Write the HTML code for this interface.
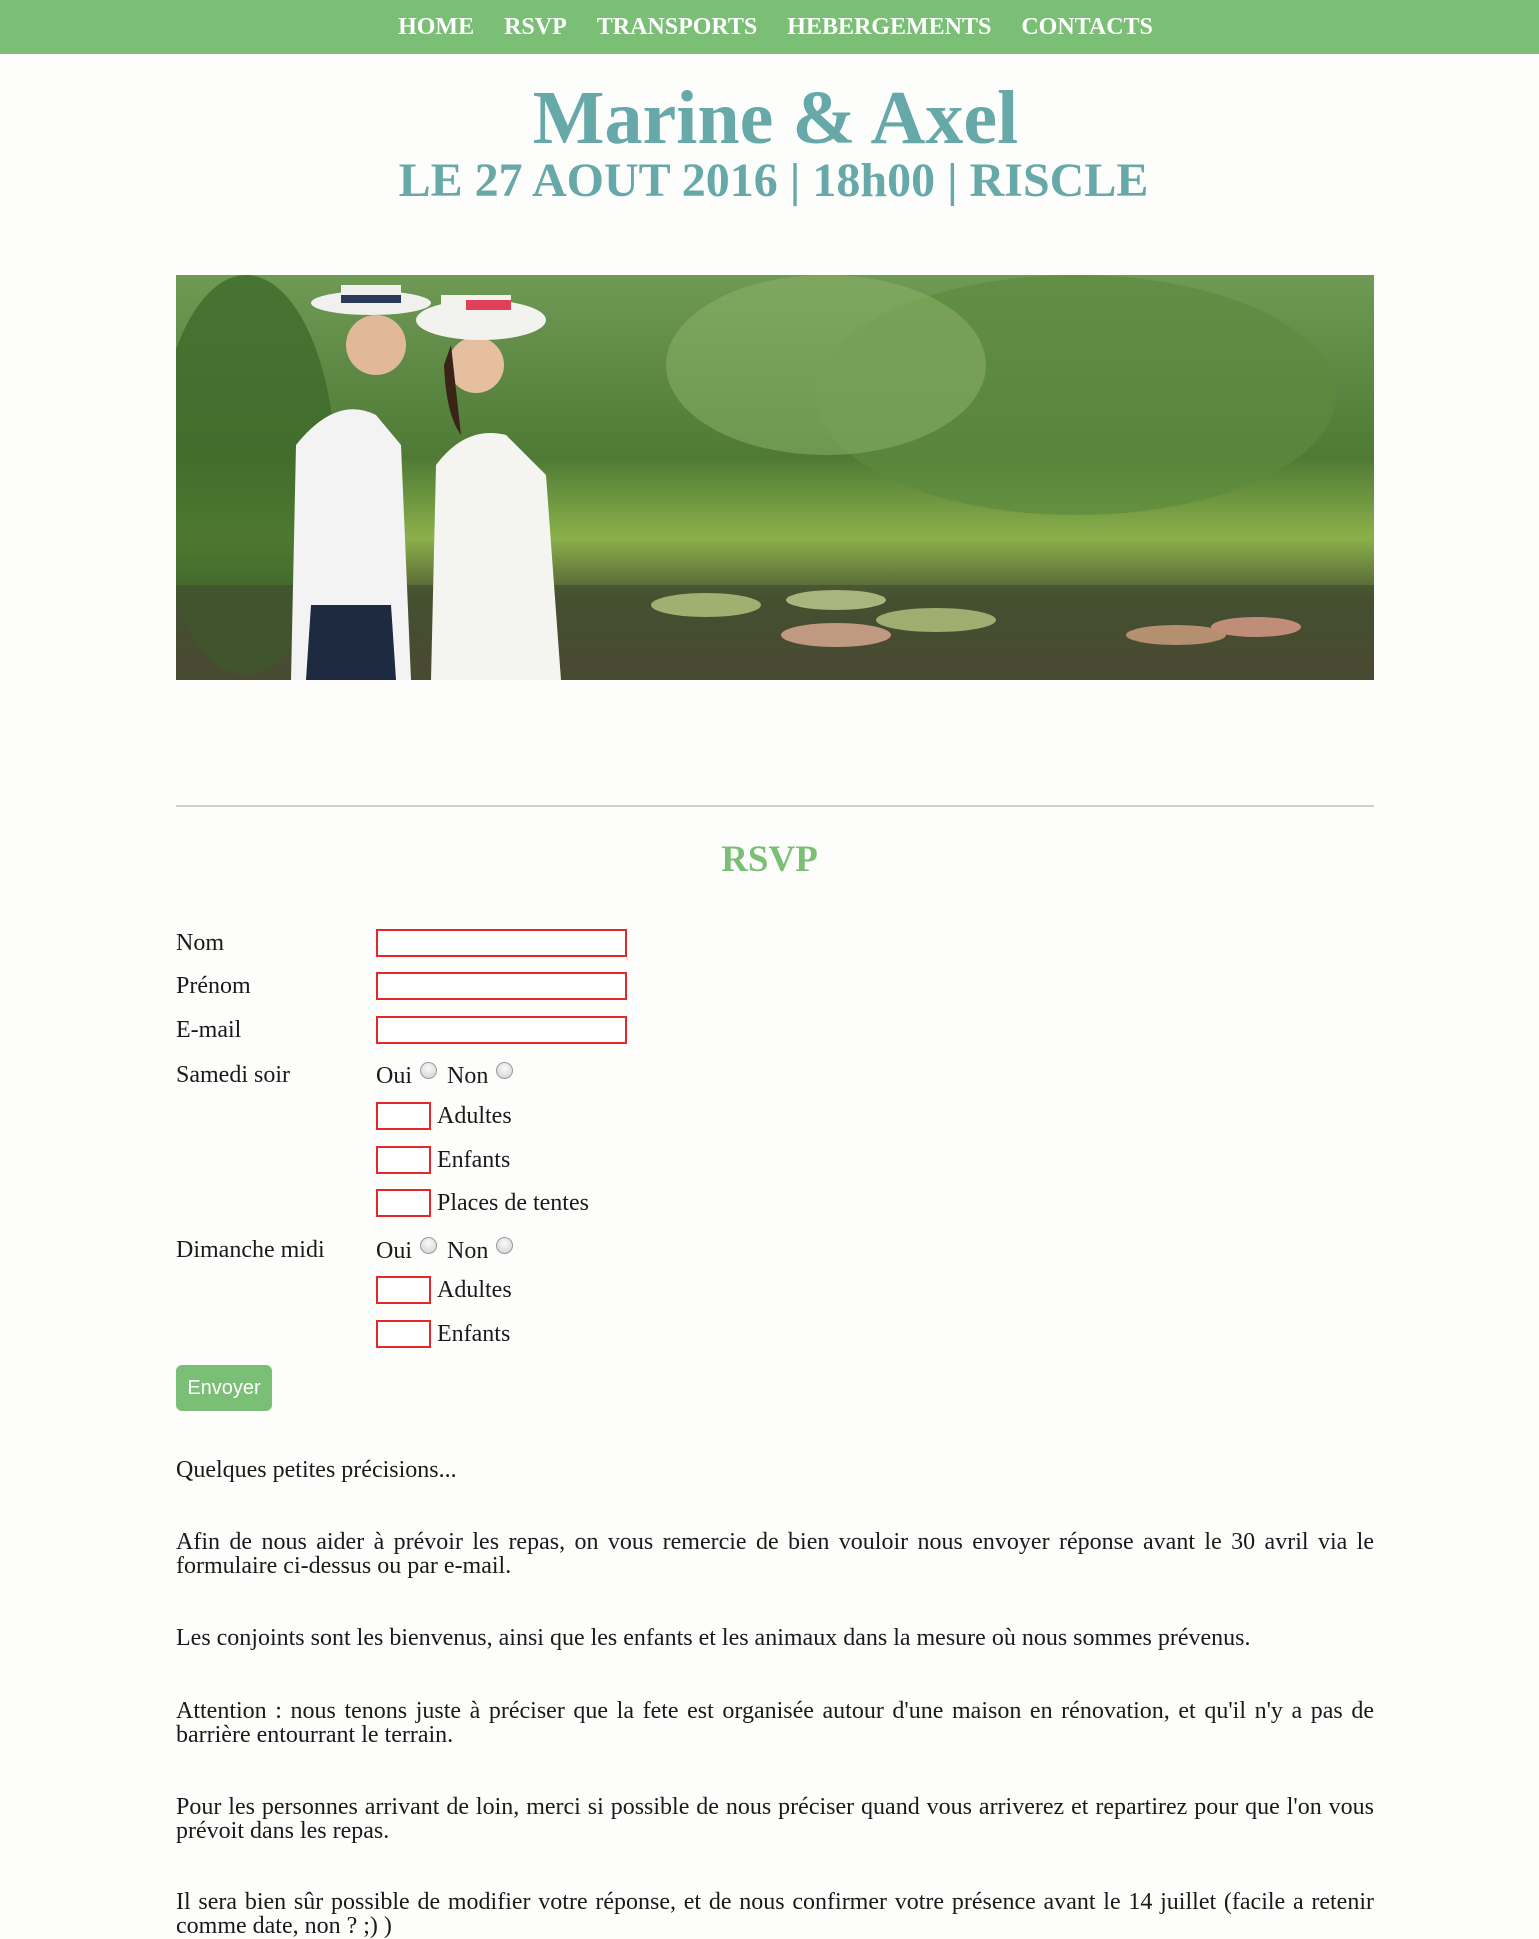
<!DOCTYPE html>
<html><head><meta charset="utf-8"><style>
html,body{margin:0;padding:0}
body{width:1539px;height:1928px;background:#fdfdfc;font-family:"Liberation Serif",serif;color:#1a1a1a;position:relative;overflow:hidden}
.nav{position:absolute;left:0;top:0;width:1539px;height:54px;background:#7bbf76;display:flex;justify-content:center;align-items:center;padding-left:12px;box-sizing:border-box}
.nav span{color:#fff;font-weight:bold;font-size:24px;margin:0 15px;line-height:1}
.ab{position:absolute}
.t1{left:6px;width:1539px;text-align:center;font-weight:bold;color:#67a9a9;font-size:76px;line-height:75px;top:81px}
.t2{left:4px;width:1539px;text-align:center;font-weight:bold;color:#67a9a9;font-size:48px;line-height:49px;top:156px}
.lbl,.row{font-size:24px;line-height:26px}
.lbl{left:176px}
.inp{position:absolute;left:376px;width:251px;height:28px;border:2px solid #e02a2a;box-sizing:border-box;background:#fff}
.sm{position:absolute;left:376px;width:55px;height:28px;border:2px solid #e02a2a;box-sizing:border-box;background:#fff}
.radio{display:inline-block;width:17px;height:17px;border-radius:50%;border:1px solid #9a9a9a;background:radial-gradient(circle at 50% 35%,#fafafa,#cfcfcf);box-sizing:border-box;vertical-align:4px;margin:0 10px 0 8px}
p{position:absolute;left:176px;width:1198px;margin:0;font-size:24px;line-height:24px;text-align:justify}
</style></head><body>
<div class="nav"><span>HOME</span><span>RSVP</span><span>TRANSPORTS</span><span>HEBERGEMENTS</span><span>CONTACTS</span></div>
<div class="ab t1">Marine &amp; Axel</div>
<div class="ab t2">LE 27 AOUT 2016 | 18h00 | RISCLE</div>

<svg class="ab" style="left:176px;top:275px" width="1198" height="405" viewBox="0 0 1198 405">
<defs>
<linearGradient id="bg" x1="0" y1="0" x2="0" y2="1"><stop offset="0" stop-color="#6f9a55"/><stop offset="0.45" stop-color="#4f7a35"/><stop offset="0.65" stop-color="#8bb04a"/><stop offset="0.8" stop-color="#4e5a34"/><stop offset="1" stop-color="#5a4a38"/></linearGradient>
</defs>
<rect width="1198" height="405" fill="url(#bg)"/>
<ellipse cx="900" cy="120" rx="260" ry="120" fill="#5d8a3e" opacity=".7"/>
<ellipse cx="650" cy="90" rx="160" ry="90" fill="#8fb46a" opacity=".5"/>
<ellipse cx="70" cy="200" rx="90" ry="200" fill="#3e6a2a" opacity=".8"/>
<rect x="0" y="310" width="1198" height="95" fill="#3f4a2e" opacity=".6"/>
<ellipse cx="530" cy="330" rx="55" ry="12" fill="#9fb070"/>
<ellipse cx="660" cy="325" rx="50" ry="10" fill="#a8b57c"/>
<ellipse cx="760" cy="345" rx="60" ry="12" fill="#9fae70"/>
<ellipse cx="1000" cy="360" rx="50" ry="10" fill="#b49070"/>
<ellipse cx="1080" cy="352" rx="45" ry="10" fill="#c08e78"/>
<ellipse cx="660" cy="360" rx="55" ry="12" fill="#c09a80"/>
<path d="M115 405 L120 170 Q160 120 200 140 L225 170 L235 405Z" fill="#f3f3f3"/>
<path d="M130 405 L135 330 L215 330 L220 405Z" fill="#1e2a40"/>
<circle cx="200" cy="70" r="30" fill="#e2b89a"/>
<ellipse cx="195" cy="28" rx="60" ry="12" fill="#f0f0ee"/>
<rect x="165" y="10" width="60" height="22" fill="#f0f0ee"/>
<rect x="165" y="20" width="60" height="8" fill="#2c3a5a"/>
<path d="M255 405 L260 190 Q290 150 330 160 L370 200 L385 405Z" fill="#f4f4f1"/>
<circle cx="300" cy="90" r="28" fill="#e6bea0"/>
<path d="M268 90 Q270 140 285 160 L275 70Z" fill="#3a2418"/>
<ellipse cx="305" cy="45" rx="65" ry="20" fill="#f2f2ef"/>
<rect x="265" y="20" width="70" height="26" fill="#f2f2ef"/>
<rect x="290" y="25" width="45" height="10" fill="#e0405a"/>
</svg>

<div class="ab" style="left:176px;top:805px;width:1198px;height:2px;background:#cfcfcf"></div>
<div class="ab" style="left:0;width:1539px;text-align:center;top:840px;font-size:37px;line-height:40px;font-weight:bold;color:#7bbf76">RSVP</div>

<div class="ab lbl" style="top:930px">Nom</div><div class="inp" style="top:929px"></div>
<div class="ab lbl" style="top:973px">Prénom</div><div class="inp" style="top:972px"></div>
<div class="ab lbl" style="top:1017px">E-mail</div><div class="inp" style="top:1016px"></div>
<div class="ab lbl" style="top:1062px">Samedi soir</div>
<div class="ab row" style="left:376px;top:1062px">Oui<span class="radio"></span>Non<span class="radio"></span></div>
<div class="sm" style="top:1102px"></div><div class="ab row" style="left:437px;top:1103px">Adultes</div>
<div class="sm" style="top:1146px"></div><div class="ab row" style="left:437px;top:1147px">Enfants</div>
<div class="sm" style="top:1189px"></div><div class="ab row" style="left:437px;top:1190px">Places de tentes</div>
<div class="ab lbl" style="top:1237px">Dimanche midi</div>
<div class="ab row" style="left:376px;top:1237px">Oui<span class="radio"></span>Non<span class="radio"></span></div>
<div class="sm" style="top:1276px"></div><div class="ab row" style="left:437px;top:1277px">Adultes</div>
<div class="sm" style="top:1320px"></div><div class="ab row" style="left:437px;top:1321px">Enfants</div>
<div class="ab" style="left:176px;top:1365px;width:96px;height:46px;background:#7bbf76;border-radius:6px;color:#fff;font-family:'Liberation Sans',sans-serif;font-size:20px;line-height:46px;text-align:center">Envoyer</div>

<p style="top:1458px">Quelques petites précisions...</p>
<p style="top:1530px">Afin de nous aider à prévoir les repas, on vous remercie de bien vouloir nous envoyer réponse avant le 30 avril via le formulaire ci-dessus ou par e-mail.</p>
<p style="top:1626px">Les conjoints sont les bienvenus, ainsi que les enfants et les animaux dans la mesure où nous sommes prévenus.</p>
<p style="top:1699px">Attention : nous tenons juste à préciser que la fete est organisée autour d'une maison en rénovation, et qu'il n'y a pas de barrière entourrant le terrain.</p>
<p style="top:1795px">Pour les personnes arrivant de loin, merci si possible de nous préciser quand vous arriverez et repartirez pour que l'on vous prévoit dans les repas.</p>
<p style="top:1890px">Il sera bien sûr possible de modifier votre réponse, et de nous confirmer votre présence avant le 14 juillet (facile a retenir comme date, non ? ;) )</p>
</body></html>
